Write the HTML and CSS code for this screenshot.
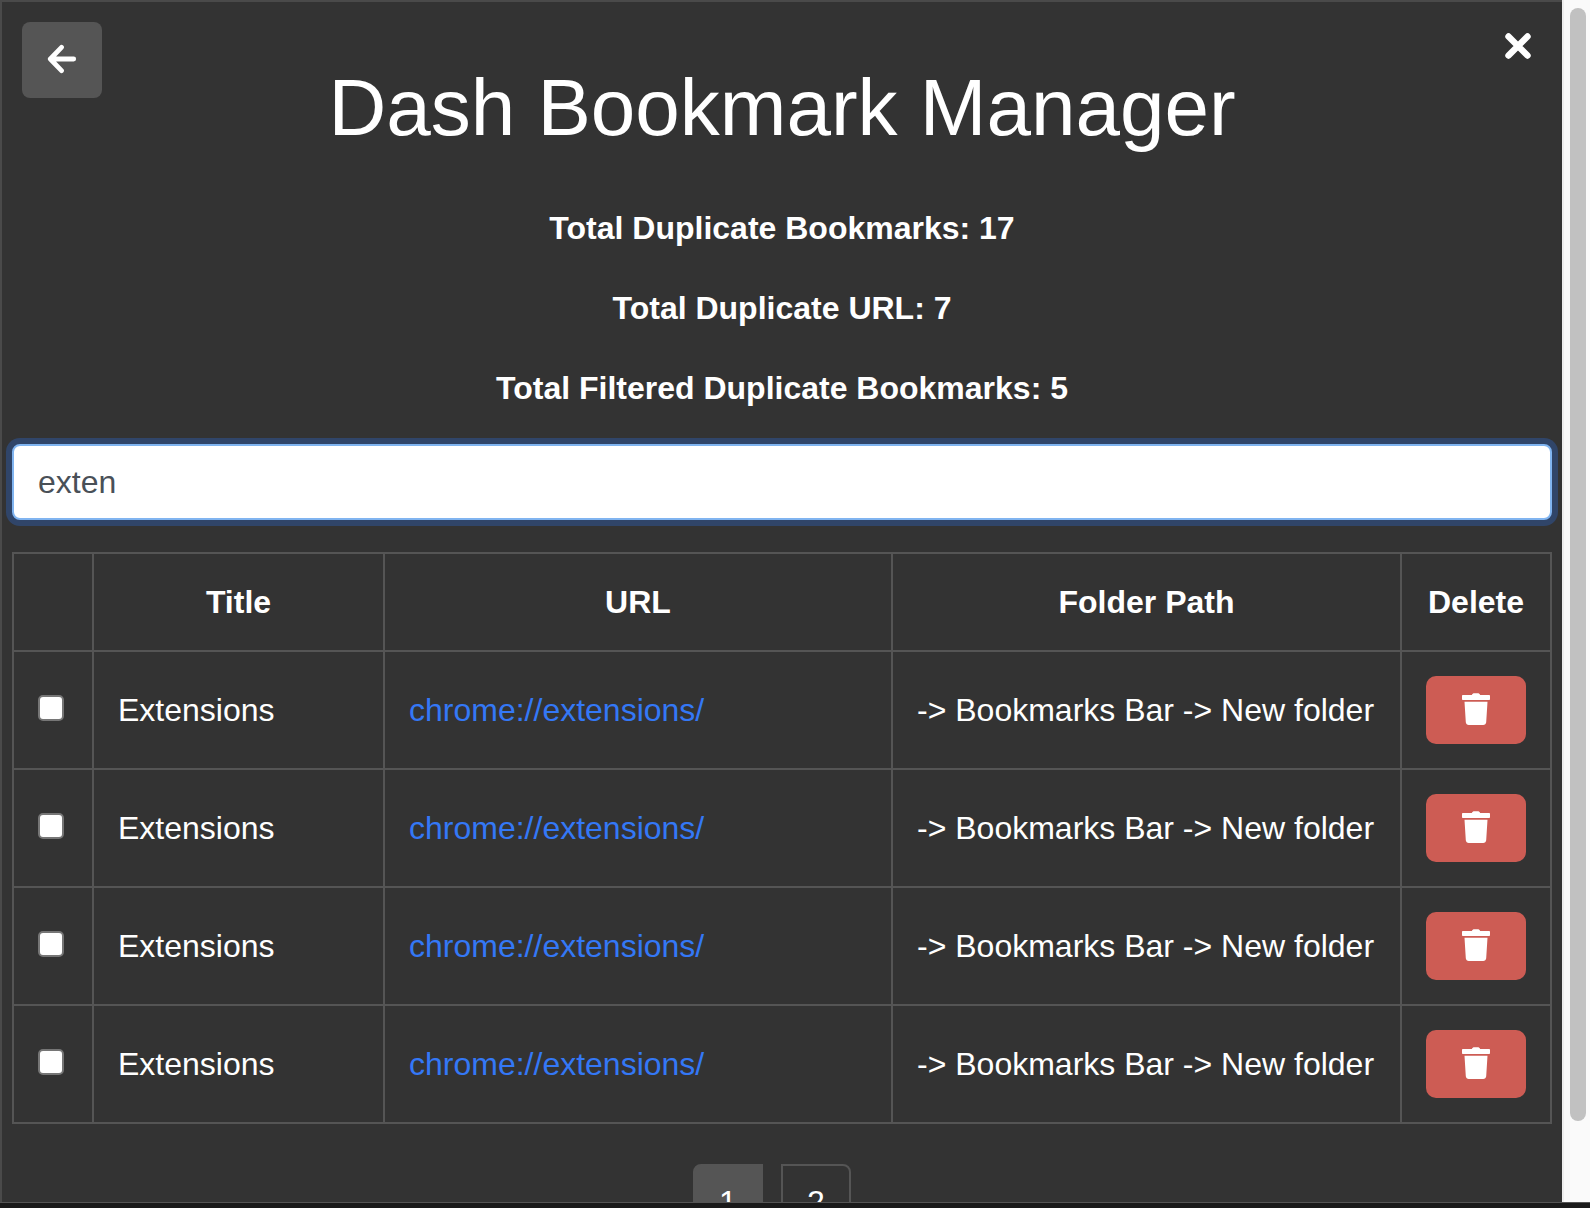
FILE: index.html
```html
<!DOCTYPE html>
<html lang="en">
<head>
  <meta charset="UTF-8" />
  <meta name="viewport" content="width=device-width, initial-scale=1.0"/>
  <title>Dash Bookmark Manager</title>
  <link rel="stylesheet" href="styles.css">
</head>
<body>

  <div class="window">
    <main class="panel">

      <header class="top">
        <button class="back-btn" aria-label="Back">
          <svg width="32" height="32" viewBox="0 0 32 32"><path d="M4.500 15H27.700M15.500 3.300 4.300 15 15.500 26.700" fill="none" stroke="#fff" stroke-width="4.800" stroke-linecap="round" stroke-linejoin="round"/></svg>
        </button>
        <h1>Dash Bookmark Manager</h1>
        <button class="close-btn" aria-label="Close">
          <svg width="26" height="26" viewBox="0 0 26 26"><path d="M3.500 3.500 22.500 22.500M22.500 3.500 3.500 22.500" fill="none" stroke="#fff" stroke-width="6.400" stroke-linecap="round"/></svg>
        </button>
      </header>

      <p class="stat">Total Duplicate Bookmarks: 17</p>
      <p class="stat">Total Duplicate URL: 7</p>
      <p class="stat">Total Filtered Duplicate Bookmarks: 5</p>

      <input type="text" class="search" value="exten">

      <table class="bookmarks">
        <colgroup>
          <col class="col-check">
          <col class="col-title">
          <col class="col-url">
          <col class="col-path">
          <col class="col-delete">
        </colgroup>
        <thead>
          <tr>
            <th></th>
            <th>Title</th>
            <th>URL</th>
            <th>Folder Path</th>
            <th>Delete</th>
          </tr>
        </thead>
        <tbody>
          <tr>
            <td><input type="checkbox" class="row-check"></td>
            <td>Extensions</td>
            <td><a href="#">chrome://extensions/</a></td>
            <td>-&gt; Bookmarks Bar -&gt; New folder</td>
            <td><button class="delete-btn" aria-label="Delete"><svg width="28" height="32" viewBox="0 0 28 32"><path fill="#fff" d="M9.800 2C10.300 .8 11.200 .2 12.300 .2h3.400c1.100 0 2 .6 2.500 1.800H27.200c.5 0 .8 .3 .8 .8v3.400c0 .5-.3 .8-.8 .8H.8c-.5 0-.8-.3-.8-.8V2.800c0-.5 .3-.8 .8-.8zM2.500 8.800h23L24.200 29.200c-.1 1.600-1.400 2.800-3 2.800H6.800c-1.600 0-2.900-1.200-3-2.800z"/></svg></button></td>
          </tr>
          <tr>
            <td><input type="checkbox" class="row-check"></td>
            <td>Extensions</td>
            <td><a href="#">chrome://extensions/</a></td>
            <td>-&gt; Bookmarks Bar -&gt; New folder</td>
            <td><button class="delete-btn" aria-label="Delete"><svg width="28" height="32" viewBox="0 0 28 32"><path fill="#fff" d="M9.800 2C10.300 .8 11.200 .2 12.300 .2h3.400c1.100 0 2 .6 2.500 1.800H27.200c.5 0 .8 .3 .8 .8v3.400c0 .5-.3 .8-.8 .8H.8c-.5 0-.8-.3-.8-.8V2.800c0-.5 .3-.8 .8-.8zM2.500 8.800h23L24.200 29.200c-.1 1.600-1.400 2.800-3 2.800H6.800c-1.600 0-2.900-1.200-3-2.800z"/></svg></button></td>
          </tr>
          <tr>
            <td><input type="checkbox" class="row-check"></td>
            <td>Extensions</td>
            <td><a href="#">chrome://extensions/</a></td>
            <td>-&gt; Bookmarks Bar -&gt; New folder</td>
            <td><button class="delete-btn" aria-label="Delete"><svg width="28" height="32" viewBox="0 0 28 32"><path fill="#fff" d="M9.800 2C10.300 .8 11.200 .2 12.300 .2h3.400c1.100 0 2 .6 2.500 1.800H27.200c.5 0 .8 .3 .8 .8v3.400c0 .5-.3 .8-.8 .8H.8c-.5 0-.8-.3-.8-.8V2.800c0-.5 .3-.8 .8-.8zM2.500 8.800h23L24.200 29.200c-.1 1.600-1.400 2.800-3 2.800H6.800c-1.600 0-2.900-1.200-3-2.800z"/></svg></button></td>
          </tr>
          <tr>
            <td><input type="checkbox" class="row-check"></td>
            <td>Extensions</td>
            <td><a href="#">chrome://extensions/</a></td>
            <td>-&gt; Bookmarks Bar -&gt; New folder</td>
            <td><button class="delete-btn" aria-label="Delete"><svg width="28" height="32" viewBox="0 0 28 32"><path fill="#fff" d="M9.800 2C10.300 .8 11.200 .2 12.300 .2h3.400c1.100 0 2 .6 2.500 1.800H27.200c.5 0 .8 .3 .8 .8v3.400c0 .5-.3 .8-.8 .8H.8c-.5 0-.8-.3-.8-.8V2.800c0-.5 .3-.8 .8-.8zM2.500 8.800h23L24.200 29.200c-.1 1.600-1.400 2.800-3 2.800H6.800c-1.600 0-2.900-1.200-3-2.800z"/></svg></button></td>
          </tr>
        </tbody>
      </table>

      <nav class="pager">
        <a href="#" class="page page-first">1</a>
        <a href="#" class="page page-last">2</a>
      </nav>

    </main>

    <div class="scrollbar"><div class="thumb"></div></div>
  </div>

  <div class="bottom-bar"></div>

</body>
</html>
```

FILE: styles.css
```css
* {
  box-sizing: border-box;
}

html, body {
  margin: 0;
  padding: 0;
  height: 100%;
  overflow: hidden;
  font-family: "Liberation Sans", Arial, sans-serif;
  font-size: 32px;
  line-height: 48px;
  color: #fff;
  background: #333;
}

body {
  display: flex;
  flex-direction: column;
}

.window {
  flex: 1;
  min-height: 0;
  display: flex;
}

.panel {
  flex: 1;
  min-width: 0;
  overflow: hidden;
  background: #333;
  border-top: 2px solid #4a4a4a;
  border-left: 2px solid #4a4a4a;
  padding: 0 10px;
}

/* header: back button, title, close */
.top {
  display: grid;
  grid-template-columns: 1fr auto 1fr;
  align-items: start;
  padding-top: 20px;
  margin-bottom: 48px;
}

.top h1 {
  margin: 38px 0 0;
  font-size: 80px;
  line-height: 96px;
  font-weight: 400;
  white-space: nowrap;
}

.back-btn, .close-btn {
  display: flex;
  align-items: center;
  justify-content: center;
  padding: 0;
  border: none;
  cursor: pointer;
}

.back-btn {
  justify-self: start;
  margin-left: 10px;
  width: 80px;
  height: 76px;
  background: #555;
  border-radius: 8px;
}

.close-btn {
  justify-self: end;
  margin: 11px 21px 0 0;
  width: 26px;
  height: 26px;
  background: transparent;
}

.stat {
  margin: 0 0 32px;
  font-weight: 700;
  text-align: center;
}

.search {
  display: block;
  width: 100%;
  height: 76px;
  padding: 12px 24px;
  font-family: inherit;
  font-size: 32px;
  color: #495057;
  background: #fff;
  border: 2px solid #80b4f0;
  border-radius: 8px;
  outline: none;
  box-shadow: 0 0 0 6px rgba(44, 110, 220, 0.32);
}

.bookmarks {
  width: calc(100% - 2px);
  margin-top: 32px;
  table-layout: fixed;
  border-collapse: collapse;
}

.col-check { width: 80px; }
.col-title { width: 291px; }
.col-url { width: 508px; }
.col-path { width: 509px; }
.col-delete { width: 150px; }

.bookmarks th, .bookmarks td {
  padding: 24px;
  border: 2px solid #555;
  vertical-align: middle;
  white-space: nowrap;
}

.bookmarks th {
  font-weight: 700;
  text-align: center;
}

.bookmarks a {
  color: #3478f6;
  text-decoration: none;
}

.row-check {
  display: block;
  appearance: none;
  margin: -4px 0 0;
  width: 26px;
  height: 26px;
  background: #fff;
  border: 2px solid #767676;
  border-radius: 5px;
}

.delete-btn {
  display: flex;
  align-items: center;
  justify-content: center;
  width: 100px;
  height: 68px;
  padding: 0 0 3px;
  background: #cd5c54;
  border: none;
  border-radius: 10px;
  cursor: pointer;
}

.pager {
  display: flex;
  justify-content: center;
  gap: 18px;
  margin-top: 40px;
  padding-right: 20px;
}

.page {
  width: 70px;
  height: 76px;
  display: flex;
  align-items: center;
  justify-content: center;
  color: #fff;
  text-decoration: none;
  border: 2px solid #555;
}

.page-first {
  background: #555;
  border-radius: 8px 0 0 8px;
}

.page-last {
  border-radius: 0 8px 8px 0;
}

.scrollbar {
  width: 28px;
  padding: 8px 4px 0 6px;
  background: #fafafa;
  border-left: 2px solid #eee;
}

.thumb {
  height: 1113px;
  background: #c1c1c1;
  border-radius: 8px;
}

.bottom-bar {
  height: 6px;
  background: #1a1a1a;
  border-top: 1px solid #555;
}
```
